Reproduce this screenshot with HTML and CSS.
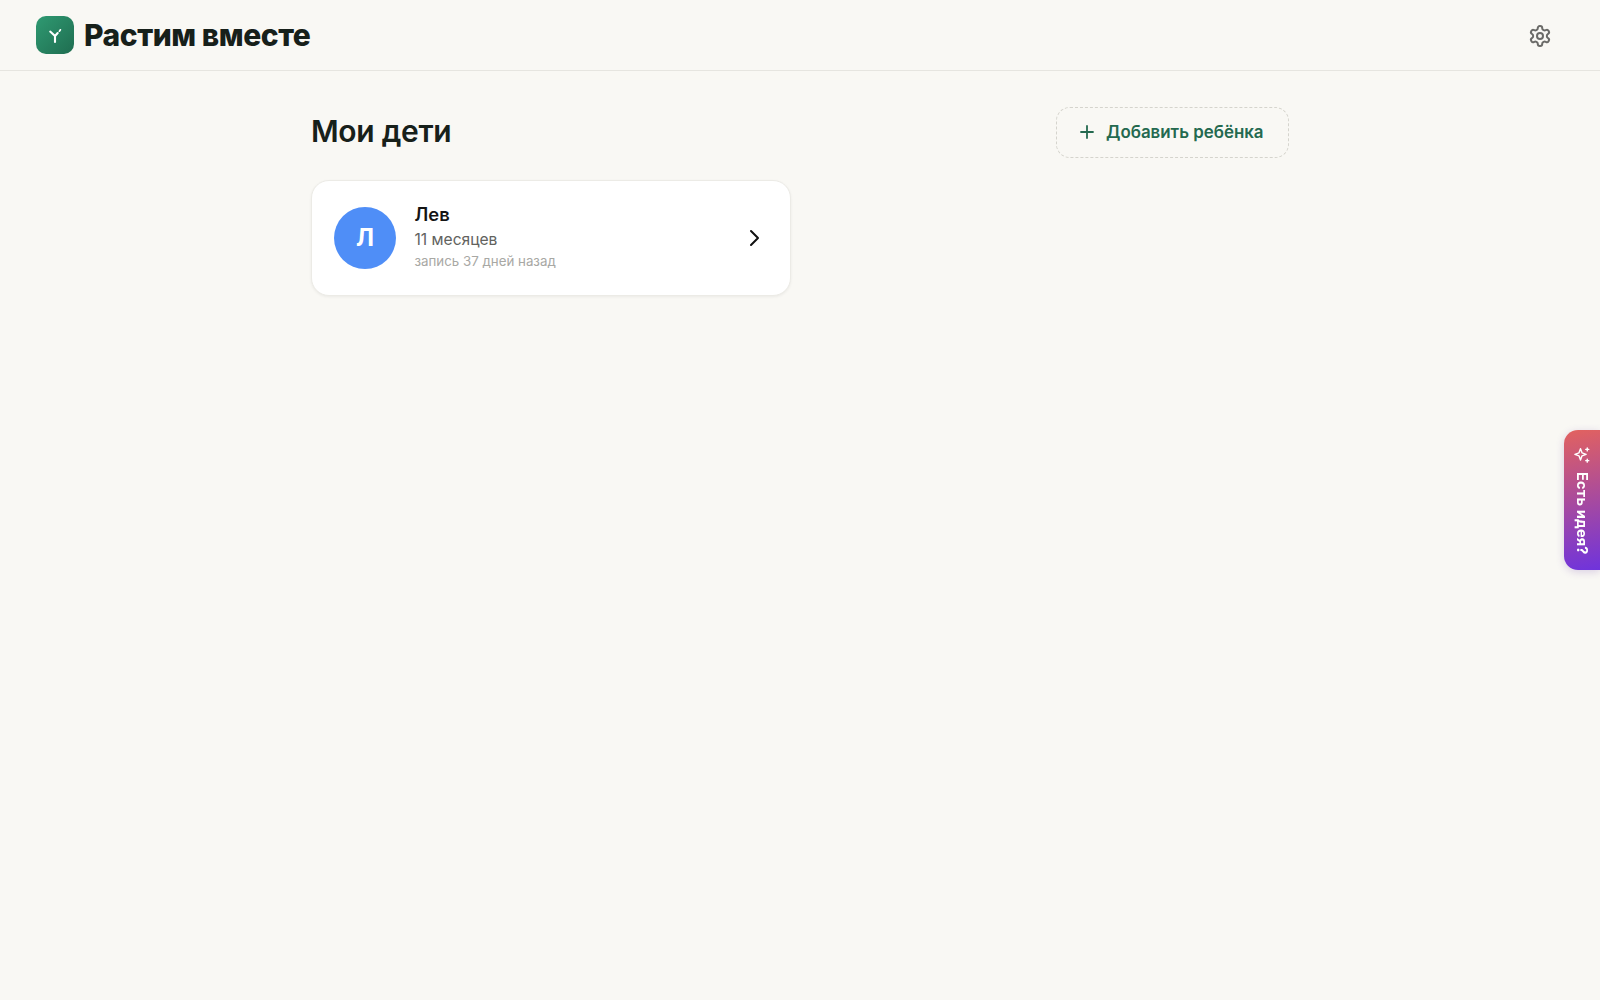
FILE: index.html
```html
<!DOCTYPE html>
<html lang="ru">
<head>
<meta charset="utf-8">
<title>Растим вместе</title>
<link rel="stylesheet" href="styles.css">
</head>
<body>
    <header class="topbar">
        <div class="brand">
            <div class="brand-logo">
                <svg width="20" height="20" viewBox="0 0 20 20" fill="none" stroke="#fff" stroke-width="2.1" stroke-linecap="round">
                    <path d="M10 17v-6L5.2 6.6"/>
                    <path d="M10 11l2.7-3"/>
                    <path d="M14.4 6.2l1-1.4" stroke-width="1.7"/>
                </svg>
            </div>
            <span class="brand-name">Растим вместе</span>
        </div>
        <button class="icon-button">
            <svg width="24" height="24" viewBox="0 0 24 24" fill="none" stroke="#6b6b68" stroke-width="2" stroke-linecap="round" stroke-linejoin="round">
                <path d="M12.22 2h-.44a2 2 0 0 0-2 2v.18a2 2 0 0 1-1 1.73l-.43.25a2 2 0 0 1-2 0l-.15-.08a2 2 0 0 0-2.73.73l-.22.38a2 2 0 0 0 .73 2.73l.15.1a2 2 0 0 1 1 1.72v.51a2 2 0 0 1-1 1.74l-.15.09a2 2 0 0 0-.73 2.73l.22.38a2 2 0 0 0 2.73.73l.15-.08a2 2 0 0 1 2 0l.43.25a2 2 0 0 1 1 1.73V20a2 2 0 0 0 2 2h.44a2 2 0 0 0 2-2v-.18a2 2 0 0 1 1-1.73l.43-.25a2 2 0 0 1 2 0l.15.08a2 2 0 0 0 2.73-.73l.22-.39a2 2 0 0 0-.73-2.73l-.15-.08a2 2 0 0 1-1-1.74v-.5a2 2 0 0 1 1-1.74l.15-.09a2 2 0 0 0 .73-2.73l-.22-.38a2 2 0 0 0-2.73-.73l-.15.08a2 2 0 0 1-2 0l-.43-.25a2 2 0 0 1-1-1.73V4a2 2 0 0 0-2-2z"/>
                <circle cx="12" cy="12" r="3"/>
            </svg>
        </button>
    </header>

    <main class="content">
        <div class="content-head">
            <h1>Мои дети</h1>
            <button class="add-button">
                <svg class="add-icon" width="18" height="18" viewBox="0 0 18 18" fill="none" stroke="#24694f" stroke-width="1.8" stroke-linecap="round">
                    <path d="M9 3v12M3 9h12"/>
                </svg>
                Добавить ребёнка
            </button>
        </div>

        <a class="child-card">
            <div class="avatar">Л</div>
            <div class="child-info">
                <div class="child-name">Лев</div>
                <div class="child-age">11 месяцев</div>
                <div class="child-last">запись 37 дней назад</div>
            </div>
            <svg class="chevron" width="24" height="24" viewBox="0 0 24 24" fill="none" stroke="#111" stroke-width="2" stroke-linecap="round" stroke-linejoin="round">
                <path d="M9 5l7 7-7 7"/>
            </svg>
        </a>
    </main>

    <button class="idea-tab">
        <svg width="18" height="18" viewBox="0 0 24 24" fill="none" stroke="#fff" stroke-width="1.9" stroke-linecap="round" stroke-linejoin="round">
            <path d="M10 3.5l2 5.6 5.5 2-5.5 2-2 5.6-2-5.6-5.5-2 5.5-2z"/>
            <path d="M19 2.5v4M17 4.5h4M19 17.5v4M17 19.5h4"/>
        </svg>
        <span class="idea-text">Есть идея?</span>
    </button>
</body>
</html>
```

FILE: styles.css
```css
html, body
{
    margin: 0;
    padding: 0;
    min-height: 100%;
}

body
{
    min-height: 1000px;
    background: #f9f8f4;
    color: #141a16;
    font-family: Inter, "Noto Sans", sans-serif;
}

button
{
    font-family: inherit;
    background: none;
    border: 0;
    padding: 0;
}

.topbar
{
    display: flex;
    align-items: center;
    justify-content: space-between;
    box-sizing: border-box;
    height: 71px;
    padding: 0 36px 0 35.5px;
    border-bottom: 1px solid #e6e5e0;
}

.brand
{
    display: flex;
    align-items: center;
    gap: 10.5px;
}

.brand-logo
{
    display: flex;
    align-items: center;
    justify-content: center;
    width: 38px;
    height: 38px;
    border-radius: 10px;
    background: linear-gradient(135deg, #2f9a72, #1f6d50);
}

.brand-name
{
    font-size: 30px;
    font-weight: 800;
    letter-spacing: -0.45px;
    line-height: 36px;
    color: #17201a;
}

.icon-button
{
    display: flex;
    width: 24px;
    height: 24px;
    margin: 1px 12px 0 0;
}

.content
{
    width: 978px;
    margin: 0 auto;
    padding-top: 36px;
}

.content-head
{
    display: flex;
    align-items: center;
    justify-content: space-between;
    margin-bottom: 22px;
}

h1
{
    margin: -3px 0 0;
    font-size: 30px;
    font-weight: 600;
    letter-spacing: -0.3px;
    color: #17201a;
}

.add-button
{
    display: flex;
    align-items: center;
    gap: 10px;
    box-sizing: border-box;
    width: 233px;
    height: 51px;
    padding: 0 21px 1px;
    border: 1px dashed #d5d4cd;
    border-radius: 14px;
    color: #24694f;
    font-size: 16.9px;
    font-weight: 600;
    white-space: nowrap;
}

.add-icon
{
    flex: none;
}

.child-card
{
    display: flex;
    align-items: center;
    box-sizing: border-box;
    width: 480px;
    height: 115.5px;
    padding: 0 22px;
    border: 1px solid #ecebe6;
    border-radius: 18px;
    background: #fff;
    box-shadow: 0 1px 3px rgba(0, 0, 0, 0.06);
}

.avatar
{
    display: flex;
    align-items: center;
    justify-content: center;
    flex: none;
    width: 62px;
    height: 62px;
    margin-right: 18.5px;
    border-radius: 50%;
    background: #4f8ef7;
    color: #fff;
    font-size: 24px;
    font-weight: 700;
}

.child-info
{
    flex: 1;
    margin-top: -2px;
}

.child-name
{
    font-size: 18.4px;
    font-weight: 600;
    line-height: 26px;
    margin-top: -1px;
    margin-bottom: 1px;
    color: #141414;
}

.child-age
{
    font-size: 15.6px;
    line-height: 23px;
    color: #62625e;
}

.child-last
{
    font-size: 13.3px;
    line-height: 21px;
    color: #a8a8a4;
}

.chevron
{
    flex: none;
    margin-right: 2px;
}

.idea-tab
{
    position: fixed;
    right: 0;
    top: 430px;
    display: flex;
    flex-direction: column;
    align-items: center;
    gap: 8px;
    box-sizing: border-box;
    width: 36px;
    height: 140px;
    padding-top: 16px;
    border-radius: 14px 0 0 14px;
    background: linear-gradient(170deg, #e2625f, #6f33dc);
    box-shadow: 0 2px 8px rgba(90, 40, 160, 0.2);
}

.idea-text
{
    writing-mode: vertical-rl;
    color: #fff;
    font-size: 14.5px;
    font-weight: 700;
    letter-spacing: 0.2px;
}
```
